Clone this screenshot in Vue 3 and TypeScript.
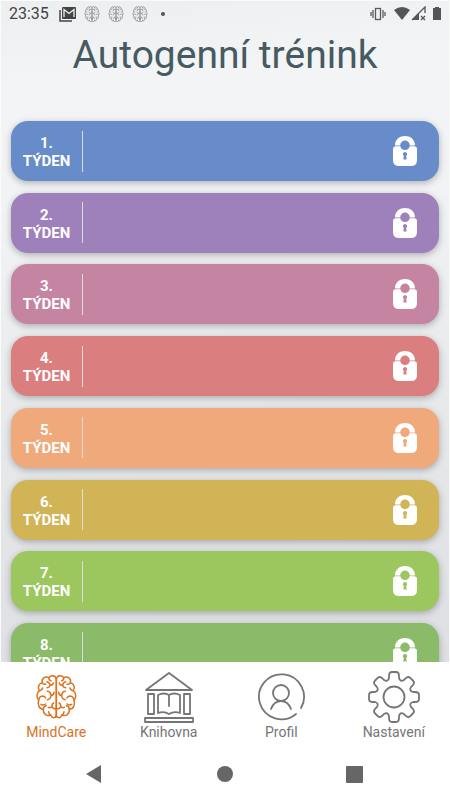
<script setup lang="ts">
interface Week {
  id: number
  tone: string
}

const weeks: Week[] = [
  { id: 1, tone: 'blue' },
  { id: 2, tone: 'violet' },
  { id: 3, tone: 'mauve' },
  { id: 4, tone: 'red' },
  { id: 5, tone: 'orange' },
  { id: 6, tone: 'gold' },
  { id: 7, tone: 'lime' },
  { id: 8, tone: 'green' },
]

const statusBrains: number[] = [1, 2, 3]

// Outline of an eight-toothed gear centred on the origin.
function gearPath(): string {
  const tooth: [number, number][] = [
    [-5, -19], [-5, -21], [-5, -25], [-2, -25], [2, -25], [5, -25], [5, -21], [5, -19],
  ]
  const rotate = (x: number, y: number, a: number): string =>
    `${(x * Math.cos(a) - y * Math.sin(a)).toFixed(2)} ${(x * Math.sin(a) + y * Math.cos(a)).toFixed(2)}`
  let d = ''
  for (let k = 0; k < 8; k++) {
    const a = (k * Math.PI) / 4
    const p = tooth.map(([x, y]) => rotate(x, y, a))
    d += k === 0 ? `M${p[0]}` : ''
    d += `L${p[1]}Q${p[2]} ${p[3]}L${p[4]}Q${p[5]} ${p[6]}L${p[7]}`
    const valley = rotate(0, -16, a + Math.PI / 8)
    d += `Q${valley} ${rotate(-5, -19, a + Math.PI / 4)}`
  }
  return d + 'Z'
}

const gear = gearPath()
</script>

<template>
  <div class="app">
    <svg class="defs" aria-hidden="true">
      <defs>
        <g id="brain-half">
          <path d="M59 10C56-1 40-2 37 7C26 1 13 10 17 22C6 24 2 37 8 46C-1 52-1 68 6 75C1 88 8 102 20 102C19 116 31 124 42 119C47 131 59 128 59 119" />
          <path d="M59 10V119" />
          <path d="M17 22Q20 29 27 26M37 7Q36 15 43 16M31 19Q39 21 40 29M40 29Q48 31 50 23M40 29Q39 37 31 37" />
          <path d="M8 46Q15 46 18 38M32 48Q42 49 43 60Q43 72 32 73M43 61Q52 60 52 51M6 75Q7 63 18 62Q25 63 27 68" />
          <path d="M20 102Q20 92 29 91M13 87Q20 91 27 86M42 119Q36 116 36 109M59 101Q48 101 46 94Q45 86 51 83M46 94Q40 99 35 96" />
        </g>
        <g id="brain">
          <use href="#brain-half" />
          <use href="#brain-half" transform="matrix(-1 0 0 1 118 0)" />
        </g>
      </defs>
    </svg>

    <main class="screen">
      <header class="status">
        <span class="clock">23:35</span>
        <svg class="mail" viewBox="0 0 17 15" aria-hidden="true">
          <path d="M1 3V14H13" fill="none" stroke="#444" stroke-width="1.5" />
          <rect x="3" y="0" width="14" height="12" rx="1" fill="#444" />
          <path d="M5 10V2.500L10 6.500L15 2.500V10" fill="none" stroke="#f3f4f4" stroke-width="1.300" />
        </svg>
        <svg v-for="n in statusBrains" :key="n" class="mini-brain" viewBox="-3 -3 124 132" aria-hidden="true">
          <use href="#brain" />
        </svg>
        <span class="dot"></span>
        <svg class="signals" viewBox="0 0 72 16" aria-hidden="true">
          <g fill="none" stroke="#5a5a5a" stroke-width="1.300">
            <rect x="5.500" y="2.500" width="5" height="11" />
            <path d="M3 4V12M1 6V10M13 4V12M15 6V10" />
          </g>
          <path d="M24 4Q32-2 40 4L32 14Z" fill="#555" />
          <path d="M42 14L55 1V7" fill="none" stroke="#555" stroke-width="1.300" />
          <path d="M42 14L49 7V14Z" fill="#555" />
          <path d="M51 10L55 14M55 10L51 14" stroke="#555" stroke-width="1.300" />
          <path d="M63 2H65V1H69V2H71V14H63Z" fill="#555" />
        </svg>
      </header>

      <h1>Autogenní trénink</h1>

      <div class="weeks">
        <button v-for="w in weeks" :key="w.id" type="button" class="week" :class="w.tone">
          <span class="label">{{ w.id }}.<br />TÝDEN</span>
          <span class="rule"></span>
          <svg class="lock" viewBox="0 0 24 30" aria-hidden="true">
            <path d="M2 9.400C2-3 22-3 22 9.400H16.800A4.800 4.800 0 0 0 7.200 9.400Z" />
            <path fill-rule="evenodd" d="M3 10.200H7.400A4.700 4.700 0 0 0 16.600 10.200H21Q24 10.200 24 13V24Q24 30 18 30H6Q0 30 0 24V13Q0 10.200 3 10.200ZM12 16A2.200 2.200 0 0 0 10.800 20L10.300 23.500H13.700L13.200 20A2.200 2.200 0 0 0 12 16Z" />
          </svg>
        </button>
      </div>
    </main>

    <nav class="tabs">
      <a href="#mindcare" class="tab active">
        <svg viewBox="-20 -13 156 156" stroke-width="4.500" aria-hidden="true"><use href="#brain" /></svg>
        <span>MindCare</span>
      </a>
      <a href="#knihovna" class="tab">
        <svg viewBox="0 0 52 52" stroke-width="1.800" aria-hidden="true">
          <path d="M26 2L49 19H3Z" />
          <rect x="5" y="23" width="6" height="20" />
          <rect x="41" y="23" width="6" height="20" />
          <rect x="2" y="47" width="48" height="4" />
          <path d="M26 24Q21 21 15 24V42Q21 40 26 43Q31 40 37 42V24Q31 21 26 24V35" />
        </svg>
        <span>Knihovna</span>
      </a>
      <a href="#profil" class="tab">
        <svg viewBox="0 0 52 52" stroke-width="1.800" aria-hidden="true">
          <path d="M41 43A22.500 22.500 0 1 1 46 37" />
          <circle cx="26" cy="22" r="8" />
          <path d="M16 38Q19 30 26 30Q33 30 36 38" />
        </svg>
        <span>Profil</span>
      </a>
      <a href="#nastaveni" class="tab">
        <svg viewBox="-26 -26 52 52" stroke-width="1.800" aria-hidden="true">
          <path :d="gear" />
          <circle r="10.500" />
        </svg>
        <span>Nastavení</span>
      </a>
    </nav>

    <footer class="system">
      <button type="button" aria-label="Zpět">
        <svg viewBox="0 0 18 18"><path d="M0 9L15 0V18Z" /></svg>
      </button>
      <button type="button" aria-label="Domů">
        <svg viewBox="0 0 18 18"><circle cx="9" cy="9" r="8" /></svg>
      </button>
      <button type="button" aria-label="Přehled">
        <svg viewBox="0 0 18 18"><rect x="0" y="1" width="17" height="17" rx="1" /></svg>
      </button>
    </footer>
  </div>
</template>

<style>
body {
  margin: 0;
  background: #fff;
}
</style>

<style scoped>
.app {
  display: flex;
  flex-direction: column;
  height: 100vh;
  overflow: hidden;
  font-family: Roboto, "Noto Sans", sans-serif;
}

.defs {
  position: absolute;
  width: 0;
  height: 0;
}

.screen {
  flex: 1;
  min-height: 0;
  overflow: hidden;
  box-sizing: border-box;
  border: 1px solid #fbfbfb;
  border-bottom: 0;
  background: linear-gradient(175deg, #eceeef 0, #f3f4f5 12%, #f2f3f4 30%, #e6e8ea 65%, #dddfe2 100%);
}

.status {
  display: flex;
  align-items: center;
  height: 26px;
  padding: 0 7px 0 8px;
  color: #444;
}

.clock {
  width: 50px;
  font-size: 16px;
  line-height: 24px;
}

.mail {
  width: 17px;
  height: 15px;
  margin-right: 8px;
}

.mini-brain {
  width: 16px;
  height: 16px;
  margin-right: 8px;
  fill: none;
  stroke: #777;
  stroke-width: 5;
}

.dot {
  width: 4px;
  height: 4px;
  margin-left: 5px;
  border-radius: 50%;
  background: #555;
}

.signals {
  width: 72px;
  height: 16px;
  margin-left: auto;
}

h1 {
  margin: 4px 0 42px;
  color: #465a61;
  font-size: 39px;
  font-weight: 400;
  line-height: 48px;
  text-align: center;
}

.weeks {
  display: flex;
  flex-direction: column;
  justify-content: space-between;
  min-height: 562px;
  padding: 0 10px;
}

.week {
  display: flex;
  align-items: center;
  width: 100%;
  height: 60px;
  padding: 0 22px 0 0;
  border: 0;
  border-radius: 17px;
  color: #fff;
  font: 700 15px/18px Roboto, "Noto Sans", sans-serif;
  box-shadow: 0 2px 7px rgba(0, 0, 0, 0.28);
}

.blue { background: #688bc9; }
.violet { background: #9e80bb; }
.mauve { background: #c585a2; }
.red { background: #da7e7f; }
.orange { background: #f0a97b; }
.gold { background: #d0b456; }
.lime { background: #9bc75e; }
.green { background: #8bba69; }

.label {
  width: 71px;
  padding-top: 2px;
  text-align: center;
}

.rule {
  width: 1px;
  height: 41px;
  background: #dcdcdc;
}

.lock {
  width: 24px;
  height: 30px;
  margin-left: auto;
  fill: #fff;
}

.tabs {
  display: grid;
  grid-template-columns: repeat(4, 1fr);
  height: 88px;
  background: #fff;
}

.tab {
  display: flex;
  flex-direction: column;
  align-items: center;
  padding-top: 9px;
  color: #757575;
  font-size: 14px;
  line-height: 18px;
  text-decoration: none;
}

.tab svg {
  width: 52px;
  height: 52px;
  fill: none;
  stroke: currentColor;
  stroke-linejoin: round;
  stroke-linecap: round;
}

.active {
  color: #d9731f;
}

.system {
  display: grid;
  grid-template-columns: repeat(3, 130px);
  justify-content: center;
  height: 50px;
  background: #fff;
}

.system button {
  display: flex;
  align-items: center;
  justify-content: center;
  padding: 0 0 3px;
  border: 0;
  background: none;
}

.system svg {
  width: 18px;
  height: 18px;
  fill: #666;
}
</style>
